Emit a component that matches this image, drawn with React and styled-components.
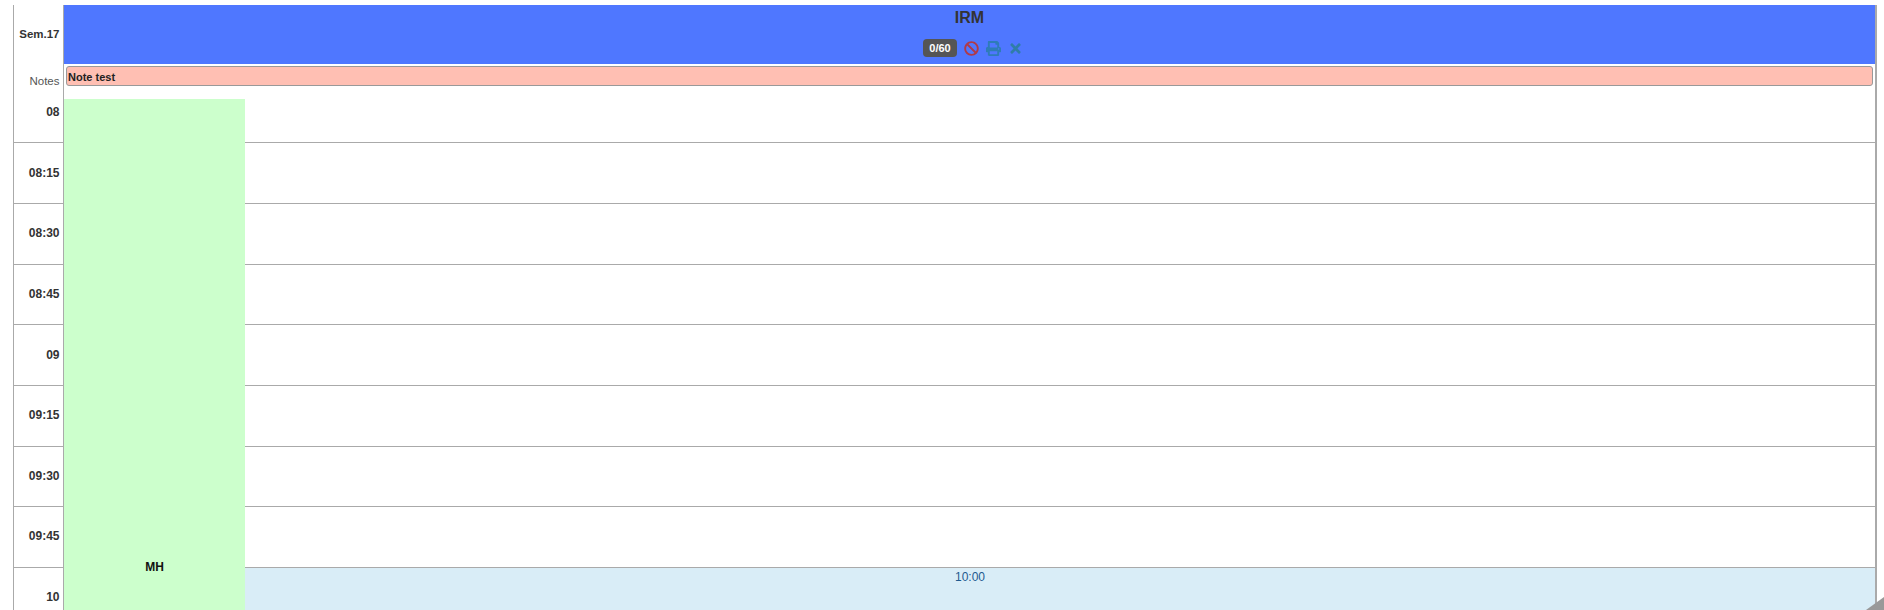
import styled, { createGlobalStyle } from 'styled-components';
import { FaBan, FaPrint, FaTimes } from 'react-icons/fa';

const GlobalStyle = createGlobalStyle`
  html, body {
    margin: 0;
    padding: 0;
    height: 610px;
    overflow: hidden;
    background: #fff;
    font-family: "Liberation Sans", Arial, sans-serif;
    color: #333;
  }
`;

const Page = styled.div`
  position: relative;
  box-sizing: border-box;
  width: 1884px;
  height: 610px;
  padding: 5px 7px 0 13px;
  overflow: hidden;
`;

const Calendar = styled.div`
  position: relative;
  box-sizing: border-box;
  height: 605px;
  border-left: 1px solid #aaa;
  border-right: 2px solid #aaa;
  overflow: hidden;
`;

const HeaderRow = styled.div`
  display: flex;
  height: 59px;
`;

const TimeLabel = styled.div`
  box-sizing: border-box;
  flex: 0 0 50px;
  border-right: 1px solid #aaa;
  padding: ${(p) => p.$top}px 3.5px 0 0;
  text-align: right;
  font-size: ${(p) => p.$size || 12}px;
  line-height: 14px;
  font-weight: ${(p) => (p.$plain ? 400 : 700)};
  color: ${(p) => (p.$plain ? '#555' : '#333')};
`;

const ResourceHead = styled.div`
  flex: 1;
  background: #4f77ff;
  text-align: center;
`;

const Title = styled.div`
  padding-top: 3px;
  font-size: 16px;
  line-height: 20px;
  font-weight: 700;
  color: #333;
`;

const Tools = styled.div`
  display: flex;
  justify-content: center;
  align-items: center;
  gap: 7px;
  margin: 11px 0 0 7px;
  height: 18px;
`;

const Counter = styled.span`
  background: #555;
  color: #fff;
  border-radius: 4px;
  padding: 0 6.5px;
  font-size: 11px;
  line-height: 18px;
  font-weight: 700;
`;

const ToolIcon = styled.span`
  display: flex;
  color: ${(p) => p.$color};
  font-size: ${(p) => p.$size}px;
`;

const NotesRow = styled.div`
  display: flex;
  height: 35px;
`;

const NotesCell = styled.div`
  flex: 1;
  padding: 2px 2px 0 2px;
`;

const Note = styled.div`
  box-sizing: border-box;
  height: 20px;
  background: #ffbfb3;
  border: 1px solid #999;
  border-radius: 3px;
  padding: 1px 0 0 1px;
  font-size: 11px;
  line-height: 18px;
  font-weight: 700;
  color: #222;
`;

const SlotRow = styled.div`
  display: flex;
  box-sizing: border-box;
  height: ${(p) => p.$height}px;
  border-bottom: ${(p) => (p.$last ? 'none' : '1px solid #aaa')};
`;

const SlotCell = styled.div`
  flex: 1;
  text-align: center;
  font-size: 12px;
  line-height: 14px;
  padding: 2px 0 0 1px;
  color: #1f5a8f;
  background: ${(p) => (p.$open ? '#d9edf7' : '#fff')};
`;

const Booking = styled.div`
  position: absolute;
  left: 50px;
  top: 94px;
  bottom: 0;
  width: 181px;
  background: #ccffcc;
  text-align: center;
  font-size: 12px;
  font-weight: 700;
  color: #111;
`;

const BookingName = styled.div`
  position: absolute;
  left: 0;
  right: 0;
  top: 461px;
  line-height: 14px;
`;

const ResizeCorner = styled.svg`
  position: absolute;
  right: 0;
  bottom: 0;
  display: block;
`;

const slots = [
  { label: '08', height: 44, top: 6 },
  { label: '08:15', height: 61, top: 23 },
  { label: '08:30', height: 61, top: 22 },
  { label: '08:45', height: 60, top: 22 },
  { label: '09', height: 61, top: 23 },
  { label: '09:15', height: 61, top: 22 },
  { label: '09:30', height: 60, top: 22 },
  { label: '09:45', height: 61, top: 22 },
];

const App = () => (
  <>
    <GlobalStyle />
    <Page>
      <Calendar>
        <HeaderRow>
          <TimeLabel $top={22} $size={11.5}>Sem.17</TimeLabel>
          <ResourceHead>
            <Title>IRM</Title>
            <Tools>
              <Counter>0/60</Counter>
              <ToolIcon $color="#b03a48" $size={15}><FaBan /></ToolIcon>
              <ToolIcon $color="#2e7cb8" $size={15}><FaPrint /></ToolIcon>
              <ToolIcon $color="#2f7da8" $size={15}><FaTimes /></ToolIcon>
            </Tools>
          </ResourceHead>
        </HeaderRow>
        <NotesRow>
          <TimeLabel $top={10} $size={11.5} $plain>Notes</TimeLabel>
          <NotesCell>
            <Note>Note test</Note>
          </NotesCell>
        </NotesRow>
        {slots.map((slot) => (
          <SlotRow key={slot.label} $height={slot.height}>
            <TimeLabel $top={slot.top}>{slot.label}</TimeLabel>
            <SlotCell />
          </SlotRow>
        ))}
        <SlotRow $height={42} $last>
          <TimeLabel $top={22}>10</TimeLabel>
          <SlotCell $open>10:00</SlotCell>
        </SlotRow>
        <Booking>
          <BookingName>MH</BookingName>
        </Booking>
      </Calendar>
      <ResizeCorner width="18" height="13" viewBox="0 0 18 13">
        <polygon points="18,0 18,13 0,13" fill="#999" />
      </ResizeCorner>
    </Page>
  </>
);

export default App;
